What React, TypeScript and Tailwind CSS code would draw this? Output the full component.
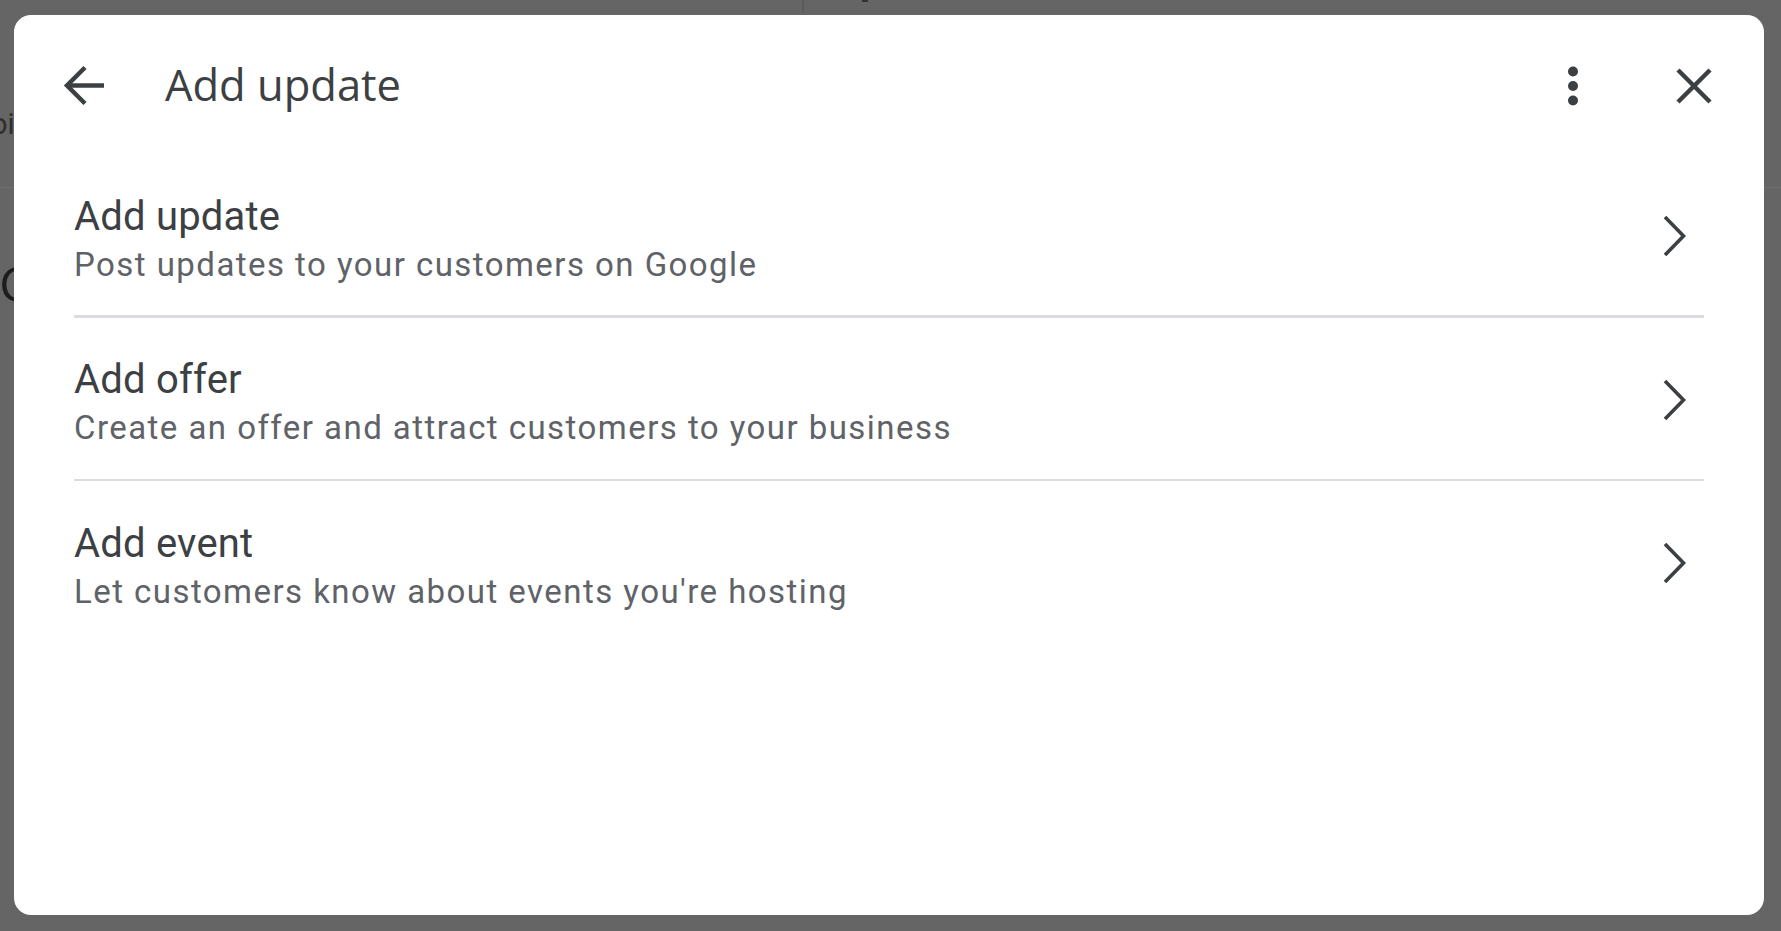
import React from 'react';

const actions = [
  { title: 'Add update', text: 'Post updates to your customers on Google' },
  { title: 'Add offer', text: 'Create an offer and attract customers to your business' },
  { title: 'Add event', text: "Let customers know about events you're hosting" },
];

function ArrowBackIcon() {
  return (
    <svg className="w-[60px] h-[60px]" viewBox="0 0 60 60" fill="none" stroke="#3c4043" strokeWidth={4.5}>
      <path d="M13 30.5H50" />
      <path d="M31 12.5L13 30.5L31 48.5" strokeLinejoin="miter" />
    </svg>
  );
}

function MoreVertIcon() {
  return (
    <svg className="w-[60px] h-[60px]" viewBox="0 0 60 60" fill="#3c4043">
      <circle cx="30" cy="16.5" r="5" />
      <circle cx="30" cy="31" r="5" />
      <circle cx="30" cy="45.5" r="5" />
    </svg>
  );
}

function CloseIcon() {
  return (
    <svg className="w-[60px] h-[60px]" viewBox="0 0 60 60" fill="none" stroke="#3c4043" strokeWidth={4.5}>
      <path d="M14 15L46 47M46 15L14 47" />
    </svg>
  );
}

function ChevronIcon() {
  return (
    <svg className="w-[40px] h-[40px]" viewBox="0 0 40 40" fill="none" stroke="#3c4043" strokeWidth={3.6}>
      <path d="M10 1L28.5 20L10 39" strokeLinejoin="miter" />
    </svg>
  );
}

export default function App() {
  return (
    <div className="relative h-[931px] w-full overflow-hidden bg-[#656565]">
      {/* page behind the scrim */}
      <div aria-hidden className="absolute inset-0">
        <div className="absolute left-[802px] top-0 h-[13px] w-[2px] bg-[#5b5b5b]" />
        <div className="absolute left-[862px] top-0 h-[2px] w-[6px] bg-[#333]" />
        <div className="absolute left-0 right-0 top-[187px] h-px bg-[#707070]" />
        <span
          className="absolute left-[-9px] top-[110px] text-[29px] leading-none text-[#2e2e2e]"
          style={{ fontFamily: 'Roboto, sans-serif' }}
        >
          oi
        </span>
        <span
          className="absolute left-[-1px] top-[258px] text-[50px] leading-none text-[#1c1c1c]"
          style={{ fontFamily: '"Open Sans", sans-serif' }}
        >
          G
        </span>
      </div>

      {/* dialog */}
      <div className="relative flex h-full pl-[14px] pt-[15px] pr-[17px] pb-[16px]">
        <div className="flex w-full flex-col rounded-[17px] bg-white">
          <div className="flex h-[139px] items-center px-[40px]">
            <ArrowBackIcon />
            <h1 className="ml-[51px] flex-1 font-['Open_Sans',sans-serif] text-[43.5px] leading-[60px] text-[#3c4043]">
              Add update
            </h1>
            <MoreVertIcon />
            <div className="ml-[61px]">
              <CloseIcon />
            </div>
          </div>

          <div className="px-[60px] font-['Roboto',sans-serif]">
            {actions.map((a, i) => (
              <div key={a.title}>
                <div className="flex h-[161px] items-center">
                  <div className="flex-1 pt-[12px]">
                    <div className="text-[40px] leading-[48px] tracking-[0.2px] text-[#3c4043]">{a.title}</div>
                    <div className="text-[33px] leading-[48px] tracking-[1.45px] text-[#5f6368]">{a.text}</div>
                  </div>
                  <div className="mr-[9.5px] pt-[3px]">
                    <ChevronIcon />
                  </div>
                </div>
                {i < actions.length - 1 && <div className="h-[2.5px] bg-[#dadce0]" />}
              </div>
            ))}
          </div>
        </div>
      </div>
    </div>
  );
}
